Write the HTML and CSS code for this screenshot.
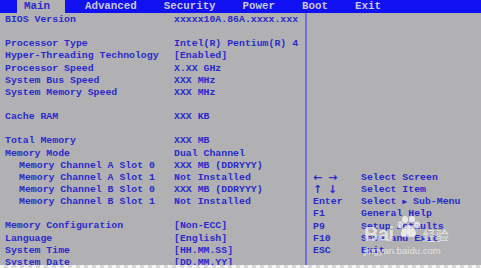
FILE: index.html
```html
<!DOCTYPE html>
<html>
<head>
<meta charset="utf-8">
<link rel="stylesheet" href="styles.css">
</head>
<body>
<div class="screen">
  <div class="menubar">
    <span class="tab active">Main</span>
    <span class="tab">Advanced</span>
    <span class="tab">Security</span>
    <span class="tab">Power</span>
    <span class="tab">Boot</span>
    <span class="tab">Exit</span>
  </div>
  <div class="body">
    <div class="settings">
      <div class="row"><span>BIOS Version</span><span>xxxxx10A.86A.xxxx.xxx</span></div>
      <div class="row"></div>
      <div class="row"><span>Processor Type</span><span>Intel(R) Pentium(R) 4</span></div>
      <div class="row"><span>Hyper-Threading Technology</span><span>[Enabled]</span></div>
      <div class="row"><span>Processor Speed</span><span>X.XX GHz</span></div>
      <div class="row"><span>System Bus Speed</span><span>XXX MHz</span></div>
      <div class="row"><span>System Memory Speed</span><span>XXX MHz</span></div>
      <div class="row"></div>
      <div class="row"><span>Cache RAM</span><span>XXX KB</span></div>
      <div class="row"></div>
      <div class="row"><span>Total Memory</span><span>XXX MB</span></div>
      <div class="row"><span>Memory Mode</span><span>Dual Channel</span></div>
      <div class="row sub"><span>Memory Channel A Slot 0</span><span>XXX MB (DDRYYY)</span></div>
      <div class="row sub"><span>Memory Channel A Slot 1</span><span>Not Installed</span></div>
      <div class="row sub"><span>Memory Channel B Slot 0</span><span>XXX MB (DDRYYY)</span></div>
      <div class="row sub"><span>Memory Channel B Slot 1</span><span>Not Installed</span></div>
      <div class="row"></div>
      <div class="row"><span>Memory Configuration</span><span>[Non-ECC]</span></div>
      <div class="row"><span>Language</span><span>[English]</span></div>
      <div class="row"><span>System Time</span><span>[HH.MM.SS]</span></div>
      <div class="row"><span>System Date</span><span>[DD.MM.YY]</span></div>
    </div>
    <div class="help">
      <div class="hrow"><span class="arr">&larr; &rarr;</span><span>Select Screen</span></div>
      <div class="hrow"><span class="arr">&uarr; &darr;</span><span>Select Item</span></div>
      <div class="hrow"><span>Enter</span><span>Select <span class="tri">&#9654;</span> Sub-Menu</span></div>
      <div class="hrow"><span>F1</span><span>General Help</span></div>
      <div class="hrow"><span>P9</span><span>Setup Defaults</span></div>
      <div class="hrow"><span>F10</span><span>Save and Exit</span></div>
      <div class="hrow"><span>ESC</span><span>Exit</span></div>
    </div>
  </div>
  <div class="watermark">
    <div class="wm-top">
      <span class="wm-bai">Bai</span>
      <svg class="paw" width="26" height="22" viewBox="0 0 26 22">
        <ellipse cx="5" cy="9" rx="3" ry="3.6"/>
        <ellipse cx="10" cy="3.5" rx="3" ry="3.4"/>
        <ellipse cx="17" cy="3.5" rx="3" ry="3.4"/>
        <ellipse cx="22" cy="9" rx="3" ry="3.6"/>
        <path d="M13.5 9 C9 9 6 15 6 18 C6 21 9 21.5 13.5 20.5 C18 21.5 21 21 21 18 C21 15 18 9 13.5 9 Z"/>
      </svg>
      <span class="wm-cn">经验</span>
    </div>
    <div class="wm-url">jingyan.baidu.com</div>
  </div>
</div>
<div class="edge"></div>
</body>
</html>
```

FILE: styles.css
```css
html, body {
  margin: 0;
  padding: 0;
  width: 481px;
  height: 268px;
  overflow: hidden;
  background: #e6e6e6;
}
.screen {
  position: relative;
  width: 481px;
  height: 265px;
  background: #b1b1b3;
  font-family: "Liberation Mono", "Courier New", monospace;
  font-weight: bold;
  color: #2a2acc;
  overflow: hidden;
}
.menubar {
  height: 13px;
  background: #1010f0;
  display: flex;
  align-items: stretch;
  padding-left: 17px;
  gap: 13px;
  font-size: 10.8px;
  line-height: 13px;
}
.tab {
  padding: 0 7px;
  color: #c8c8d8;
}
.tab.active {
  background: #b1b1b3;
  color: #2a2acc;
  padding-right: 15px;
}
.body {
  display: flex;
  height: 252px;
}
.settings {
  width: 305px;
  border-right: 2px solid #7272d4;
  padding-top: 1px;
  font-size: 9.85px;
  line-height: 12.15px;
}
.row {
  display: grid;
  grid-template-columns: 169px 1fr;
  padding-left: 5px;
  height: 12.15px;
  white-space: nowrap;
}
.row.sub span:first-child {
  padding-left: 14px;
}
.help {
  flex: 1;
  padding-top: 159px;
  padding-left: 6px;
  font-size: 9.85px;
  line-height: 12.15px;
}
.hrow {
  display: grid;
  grid-template-columns: 48px 1fr;
  white-space: nowrap;
  height: 12.15px;
}
.arr {
  font-family: "DejaVu Sans", sans-serif;
  font-size: 11px;
  letter-spacing: 1px;
}
.tri {
  font-size: 8px;
}
.watermark {
  position: absolute;
  left: 364px;
  top: 208px;
  color: rgba(255, 255, 255, 0.65);
  font-family: "Liberation Sans", Arial, sans-serif;
}
.wm-top {
  display: flex;
  align-items: flex-end;
  height: 36px;
}
.wm-bai {
  font-size: 20px;
  line-height: 20px;
  font-weight: bold;
  letter-spacing: -0.5px;
}
.paw {
  fill: rgba(255, 255, 255, 0.7);
  margin: 0 2px 6px 1px;
}
.wm-cn {
  font-family: "Noto Sans CJK SC", sans-serif;
  font-weight: normal;
  font-size: 13px;
  line-height: 18px;
}
.wm-url {
  font-size: 9.5px;
  font-weight: normal;
  line-height: 12px;
  margin-top: 1px;
}
.edge {
  height: 3px;
  background: repeating-linear-gradient(90deg, #f4f4f4 0 4px, #d8d8d8 4px 8px);
}
```
